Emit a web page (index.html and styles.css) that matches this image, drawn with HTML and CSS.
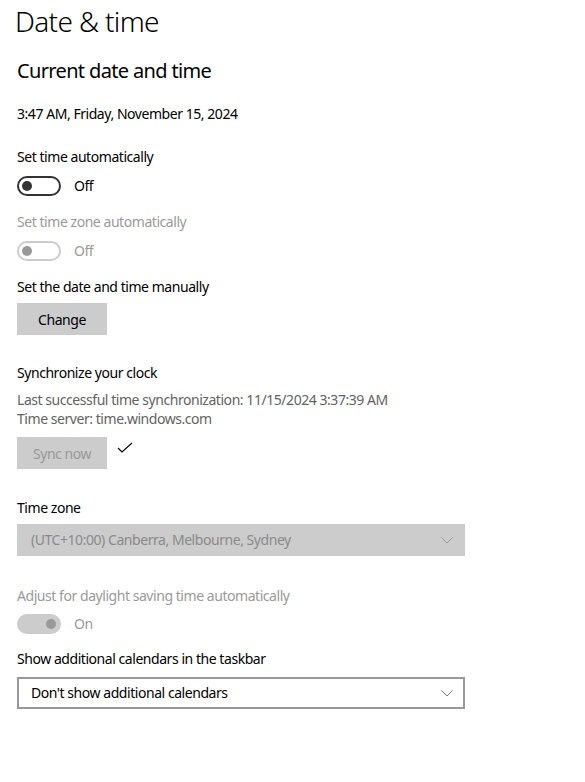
FILE: index.html
```html
<!DOCTYPE html>
<html lang="en">

<head>
    <meta charset="UTF-8">
    <meta name="viewport" content="width=device-width, initial-scale=1.0">
    <title>Date &amp; time</title>
    <link rel="stylesheet" href="styles.css">
</head>

<body>
    <div class="page">
        <h1 class="page-title">Date &amp; time</h1>
        <h2 class="section-title">Current date and time</h2>
        <div class="current-time">3:47 AM, Friday, November 15, 2024</div>

        <div class="setting setting-first">
            <div class="label">Set time automatically</div>
            <div class="toggle-row">
                <span class="toggle"><span class="knob"></span></span>
                <span class="toggle-state">Off</span>
            </div>
        </div>

        <div class="setting disabled">
            <div class="label">Set time zone automatically</div>
            <div class="toggle-row">
                <span class="toggle"><span class="knob"></span></span>
                <span class="toggle-state">Off</span>
            </div>
        </div>

        <div class="setting setting-tight">
            <div class="label">Set the date and time manually</div>
            <button class="btn">Change</button>
        </div>

        <div class="setting sync">
            <div class="label">Synchronize your clock</div>
            <div class="sync-info">
                <div>Last successful time synchronization: 11/15/2024 3:37:39 AM</div>
                <div>Time server: time.windows.com</div>
            </div>
            <div class="sync-row">
                <button class="btn btn-disabled">Sync now</button>
                <!-- 同步成功的勾 -->
                <svg class="check" width="16" height="12" viewBox="0 0 16 12">
                    <polyline points="1,6 5,10 15,1" fill="none" stroke="#000" stroke-width="1.1" />
                </svg>
            </div>
        </div>

        <div class="setting timezone">
            <div class="label">Time zone</div>
            <div class="select select-disabled">
                <span>(UTC+10:00) Canberra, Melbourne, Sydney</span>
                <svg class="chevron" width="12" height="7" viewBox="0 0 12 7">
                    <polyline points="0.5,0.5 6,6 11.5,0.5" fill="none" stroke="#9a9a9a" stroke-width="1" />
                </svg>
            </div>
        </div>

        <div class="setting disabled daylight">
            <div class="label">Adjust for daylight saving time automatically</div>
            <div class="toggle-row">
                <span class="toggle toggle-on"><span class="knob"></span></span>
                <span class="toggle-state">On</span>
            </div>
        </div>

        <div class="setting calendars">
            <div class="label">Show additional calendars in the taskbar</div>
            <div class="select">
                <span>Don't show additional calendars</span>
                <svg class="chevron" width="12" height="7" viewBox="0 0 12 7">
                    <polyline points="0.5,0.5 6,6 11.5,0.5" fill="none" stroke="#7a7a7a" stroke-width="1" />
                </svg>
            </div>
        </div>
    </div>
</body>

</html>
```

FILE: styles.css
```css
* {
    margin: 0;
    padding: 0;
    box-sizing: border-box;
}

body {
    font-family: "Segoe UI", "Noto Sans", "Open Sans", sans-serif;
    background-color: #fff;
    color: #000;
    font-size: 14px;
    line-height: 20px;
    letter-spacing: -0.45px;
}

.page {
    padding: 1px 0 40px 17px;
    width: 465px;
}

.page-title {
    font-size: 28px;
    font-weight: 300;
    line-height: 40px;
    margin-left: -2px;
    letter-spacing: -0.65px;
}

.section-title {
    font-size: 20px;
    font-weight: 400;
    line-height: 28px;
    margin-top: 16px;
    letter-spacing: -0.65px;
}

.current-time {
    margin-top: 19px;
}

.setting {
    margin-top: 16px;
}

.setting-first {
    margin-top: 23px;
}

.label {
    line-height: 20px;
}

.disabled .label,
.disabled .toggle-state {
    color: #9a9a9a;
}

.toggle-row {
    display: flex;
    align-items: center;
    gap: 13px;
    margin-top: 9px;
}

.toggle {
    width: 44px;
    height: 20px;
    border: 2px solid #333;
    border-radius: 10px;
    display: flex;
    align-items: center;
    padding-left: 3px;
}

.knob {
    width: 10px;
    height: 10px;
    border-radius: 50%;
    background-color: #333;
}

.disabled .toggle {
    border-color: #ccc;
}

.disabled .knob {
    background-color: #999;
}

.toggle-on {
    justify-content: flex-end;
    padding-left: 0;
    padding-right: 3px;
}

.disabled .toggle-on {
    background-color: #ccc;
}

.setting-tight .btn {
    margin-top: 6px;
}

.btn {
    display: block;
    width: 90px;
    height: 32px;
    border: none;
    background-color: #ccc;
    font-family: inherit;
    font-size: 14px;
    letter-spacing: -0.45px;
    color: #000;
}

.btn-disabled {
    color: #999;
}

.sync {
    margin-top: 28px;
}

.sync-info {
    margin-top: 7px;
    color: #636363;
    line-height: 19px;
}

.sync-row {
    display: flex;
    align-items: center;
    gap: 10px;
    margin-top: 9px;
}

.check {
    margin-top: -10px;
}

.timezone {
    margin-top: 29px;
}

.select {
    display: flex;
    align-items: center;
    justify-content: space-between;
    width: 448px;
    height: 32px;
    margin-top: 6px;
    padding: 0 10px 0 12px;
    border: 2px solid #999;
    background-color: #fff;
}

.select-disabled {
    border-color: #ccc;
    background-color: #ccc;
    color: #8a8a8a;
}

.daylight {
    margin-top: 30px;
}

.daylight .toggle-row {
    margin-top: 8px;
}

.calendars {
    margin-top: 15px;
}

.calendars .select {
    margin-top: 8px;
}
```
